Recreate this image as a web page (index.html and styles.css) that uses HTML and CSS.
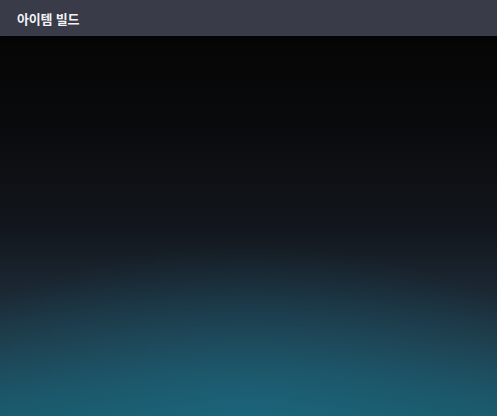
FILE: index.html
```html
<!DOCTYPE html>
<html lang="ko">
<head>
<meta charset="utf-8">
<link rel="stylesheet" href="styles.css">
</head>
<body>
<div class="app">
  <header class="topbar">
    <span class="title">아이템 빌드</span>
  </header>
  <main class="stage"></main>
</div>
</body>
</html>
```
FILE: styles.css
```css
html, body {
  margin: 0;
  padding: 0;
  height: 100%;
}
body {
  font-family: "Noto Sans CJK KR", "Noto Sans", sans-serif;
  background: #050505;
}
.app {
  display: flex;
  flex-direction: column;
  height: 100%;
}
.topbar {
  height: 36px;
  flex: none;
  display: flex;
  align-items: center;
  padding-left: 17px;
  background: #393b48;
  box-shadow: 0 1px 3px rgba(0,0,0,0.6);
  position: relative;
  z-index: 1;
}
.title {
  color: #f2f2f5;
  font-size: 13px;
  font-weight: 700;
  letter-spacing: -0.2px;
}
.stage {
  flex: 1;
  background:
    radial-gradient(ellipse 70% 45% at 50% 100%, rgba(28,110,135,0.55) 0%, rgba(28,110,135,0) 100%),
    linear-gradient(180deg, #050505 0%, #0a0b0d 25%, #12161c 50%, #1a2530 65%, #1e3a48 80%, #1c4f60 93%, #1a5869 100%);
}
```
